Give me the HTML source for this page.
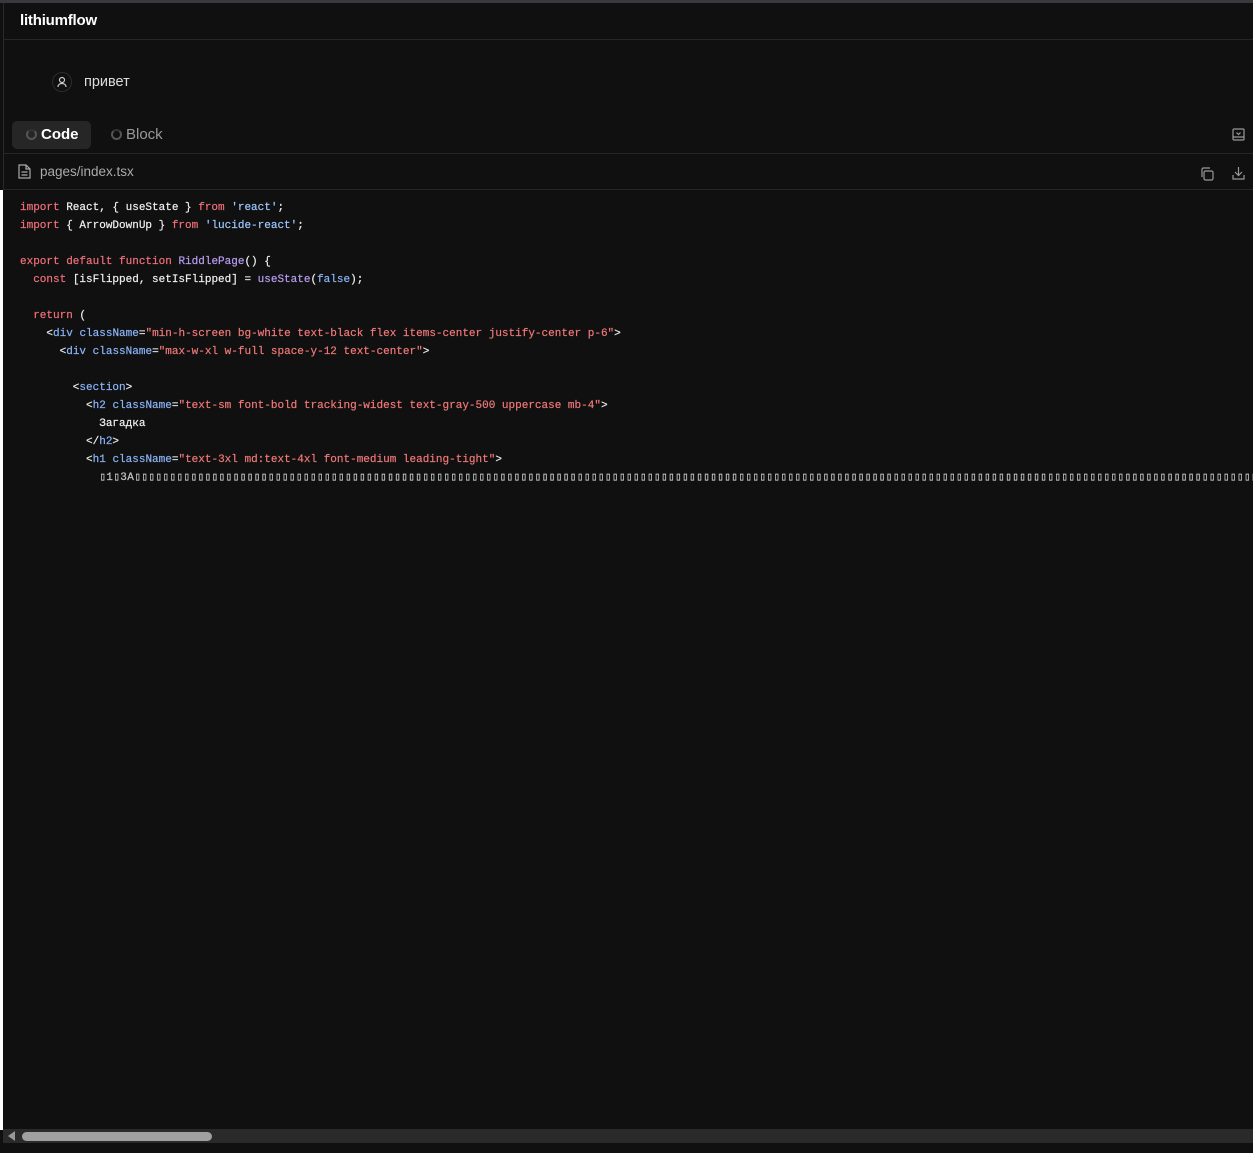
<!DOCTYPE html>
<html><head><meta charset="utf-8"><style>
*{margin:0;padding:0;box-sizing:border-box}
body{width:1253px;height:1153px;background:#101010;font-family:"Liberation Sans",sans-serif;overflow:hidden;position:relative;color:#ddd}
.topbar{position:absolute;left:0;top:0;width:1253px;height:3px;background:#3a3a3e}
.vline{position:absolute;left:3px;top:3px;width:1px;height:187px;background:#2a2a2a}
.white{position:absolute;left:0;top:190px;width:3px;height:940px;background:#fff}
.hr{position:absolute;left:3px;width:1250px;height:1px;background:#262626}
.logo{position:absolute;left:20px;top:12px;font-weight:bold;font-size:15px;color:#fff;letter-spacing:-0.2px}
.av{position:absolute;left:52px;top:72px;width:20px;height:20px;border:1px solid #2c2c2c;border-radius:50%}
.msg{position:absolute;left:84px;top:74px;font-size:14.5px;color:#ddd}
.tab{position:absolute;top:121px;height:28px;border-radius:5px;font-size:15px;font-weight:bold;padding:5px 0 0 0}
.spin{display:inline-block;width:11px;height:11px;border:2px solid #555;border-top-color:#333;border-radius:50%;vertical-align:-1px;margin-right:4px}
.file{position:absolute;left:40px;top:164px;font-size:13.5px;color:#aaa}
pre{position:absolute;left:20px;top:199px;font-family:"Liberation Mono","DejaVu Sans Mono",monospace;font-size:11px;line-height:18px;color:#f0f0f0;white-space:pre;width:1233px;overflow:hidden;-webkit-text-stroke:0.2px}
.k{color:#f0707a}.s{color:#9fc7ff}.f{color:#b89cf0}.t{color:#8ab4f8}.a{color:#f07878}.g{color:#c8c8c8;letter-spacing:0.4px}
.sb{position:absolute;left:3px;top:1129px;width:1250px;height:14px;background:#2a2a2a}
.thumb{position:absolute;left:22px;top:1132px;width:190px;height:9px;background:#a0a0a0;border-radius:5px}
</style></head><body>
<div class="topbar"></div><div class="vline"></div><div class="white"></div>
<div class="logo">lithiumflow</div>
<div class="hr" style="top:39px"></div>
<div class="av"><svg width="18" height="18" viewBox="0 0 18 18" fill="none" stroke="#ccc" stroke-width="1.2"><circle cx="9" cy="7" r="2.5"/><path d="M5 14c0-2.5 2-3.5 4-3.5s4 1 4 3.5"/></svg></div>
<div class="msg">привет</div>
<div class="tab" style="left:12px;width:79px;background:#262626;color:#fff;padding-left:14px"><span class="spin"></span>Code</div>
<div class="tab" style="left:111px;color:#999;font-weight:normal"><span class="spin"></span>Block</div>
<svg style="position:absolute;left:1232px;top:128px" width="13" height="13" viewBox="0 0 13 13" fill="none" stroke="#999" stroke-width="1.2"><rect x="1" y="1" width="11" height="11" rx="1"/><path d="M1 9h11M4.5 4.5l2 2 2-2"/></svg>
<div class="hr" style="top:153px"></div>
<svg style="position:absolute;left:18px;top:164px" width="13" height="15" viewBox="0 0 13 15" fill="none" stroke="#aaa" stroke-width="1.2"><path d="M1 1h7l4 4v9H1z M8 1v4h4 M3.5 8h6 M3.5 11h6"/></svg>
<div class="file">pages/index.tsx</div>
<svg style="position:absolute;left:1200px;top:167px" width="14" height="14" viewBox="0 0 14 14" fill="none" stroke="#999" stroke-width="1.2"><rect x="4" y="4" width="9" height="9" rx="1.5"/><path d="M2 10V2.5C2 2 2.5 1 3 1h7"/></svg>
<svg style="position:absolute;left:1232px;top:166px" width="13" height="14" viewBox="0 0 13 14" fill="none" stroke="#999" stroke-width="1.2"><path d="M6.5 1v8M3 6l3.5 3.5L10 6M1 9v4h11V9"/></svg>
<div class="hr" style="top:189px"></div>
<pre><span class="k">import</span> React, { useState } <span class="k">from</span> <span class="s">'react'</span>;
<span class="k">import</span> { ArrowDownUp } <span class="k">from</span> <span class="s">'lucide-react'</span>;

<span class="k">export default function</span> <span class="f">RiddlePage</span>() {
  <span class="k">const</span> [isFlipped, setIsFlipped] = <span class="f">useState</span>(<span class="t">false</span>);

  <span class="k">return</span> (
    &lt;<span class="t">div</span> <span class="t">className</span>=<span class="a">"min-h-screen bg-white text-black flex items-center justify-center p-6"</span>&gt;
      &lt;<span class="t">div</span> <span class="t">className</span>=<span class="a">"max-w-xl w-full space-y-12 text-center"</span>&gt;

        &lt;<span class="t">section</span>&gt;
          &lt;<span class="t">h2</span> <span class="t">className</span>=<span class="a">"text-sm font-bold tracking-widest text-gray-500 uppercase mb-4"</span>&gt;
            Загадка
          &lt;/<span class="t">h2</span>&gt;
          &lt;<span class="t">h1</span> <span class="t">className</span>=<span class="a">"text-3xl md:text-4xl font-medium leading-tight"</span>&gt;
            <span class="g">▯1▯3A▯▯▯▯▯▯▯▯▯▯▯▯▯▯▯▯▯▯▯▯▯▯▯▯▯▯▯▯▯▯▯▯▯▯▯▯▯▯▯▯▯▯▯▯▯▯▯▯▯▯▯▯▯▯▯▯▯▯▯▯▯▯▯▯▯▯▯▯▯▯▯▯▯▯▯▯▯▯▯▯▯▯▯▯▯▯▯▯▯▯▯▯▯▯▯▯▯▯▯▯▯▯▯▯▯▯▯▯▯▯▯▯▯▯▯▯▯▯▯▯▯▯▯▯▯▯▯▯▯▯▯▯▯▯▯▯▯▯▯▯▯▯▯▯▯▯▯▯▯▯▯▯▯▯▯▯▯▯▯▯▯▯▯▯▯▯▯▯▯▯▯▯▯▯▯▯▯▯▯▯▯▯▯▯▯▯</span></pre>
<div class="sb"></div>
<svg style="position:absolute;left:8px;top:1131px" width="8" height="10"><path d="M7 0v10L0 5z" fill="#999"/></svg>
<div class="thumb"></div>
</body></html>
